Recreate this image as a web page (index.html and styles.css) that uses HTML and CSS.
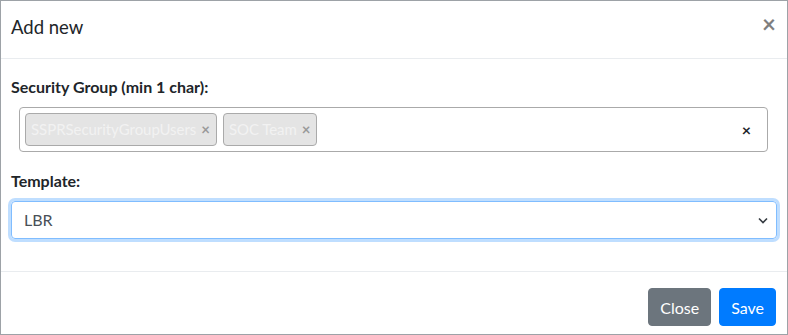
FILE: index.html
```html
<!DOCTYPE html>
<html lang="en">
<head>
<meta charset="utf-8">
<title>Add new</title>
<link rel="stylesheet" href="styles.css">
</head>
<body>
<div class="modal">
  <div class="modal-header">
    <h5 class="modal-title">Add new</h5>
    <button class="close" type="button" aria-label="Close">&times;</button>
  </div>
  <div class="modal-body">
    <div class="form-group">
      <label class="label">Security Group (min 1 char):</label>
      <div class="multi">
        <ul class="choices">
          <li class="choice">SSPRSecurityGroupUsers<span class="choice-x">&times;</span></li>
          <li class="choice">SOC Team<span class="choice-x">&times;</span></li>
        </ul>
        <span class="clear">&times;</span>
      </div>
    </div>
    <div class="form-group">
      <label class="label">Template:</label>
      <div class="select">
        <span class="select-value">LBR</span>
        <svg class="chevron" width="10" height="7" viewBox="0 0 10 7"><path d="M1 1.5 L5 5.5 L9 1.5" fill="none" stroke="#343a40" stroke-width="1.6"/></svg>
      </div>
    </div>
  </div>
  <div class="modal-footer">
    <button class="btn btn-secondary" type="button">Close</button>
    <button class="btn btn-primary" type="button">Save</button>
  </div>
</div>
</body>
</html>
```
FILE: styles.css
```css
* { box-sizing: border-box; }
html, body { margin: 0; padding: 0; }
body {
  font-family: "Lato", "Noto Sans", sans-serif;
  font-size: 16px;
  line-height: 1.5;
  color: #212529;
  background: #fff;
}
.modal {
  width: 788px;
  height: 335px;
  border: 1px solid #9da2a7;
  display: flex;
  flex-direction: column;
}
.modal-header {
  display: flex;
  justify-content: space-between;
  align-items: flex-start;
  height: 58px;
  padding: 11px 10px 0 10px;
  border-bottom: 1px solid #e9ecef;
}
.modal-title {
  margin: 0;
  font-size: 18.5px;
  font-weight: 400;
  line-height: 30px;
}
.close {
  border: 0;
  background: transparent;
  padding: 0;
  margin: 0 1px 0 0;
  font-family: inherit;
  font-size: 24px;
  font-weight: 700;
  line-height: 1;
  color: #000;
  opacity: .5;
  cursor: pointer;
}
.modal-body {
  flex: 1;
  padding: 16px 10px 0 10px;
}
.form-group { margin-bottom: 17px; }
.label {
  display: block;
  font-weight: 700;
  margin-bottom: 8px;
}
.multi {
  margin: 0 9px 0 8px;
  border: 1px solid #aaa;
  border-radius: 4px;
  padding: 5px;
  display: flex;
  align-items: center;
}
.choices {
  list-style: none;
  margin: 0;
  padding: 0;
  display: flex;
  gap: 6px;
  flex: 1;
}
.choice {
  height: 33px;
  display: flex;
  align-items: center;
  padding: 0 6px 0 5px;
  background: #e4e4e4;
  border: 1px solid #aaa;
  border-radius: 4px;
  color: #f2f2f2;
  font-size: 15px;
  letter-spacing: -0.05px;
}
.choice-x {
  margin-left: 5px;
  font-weight: 700;
  color: #999;
  font-size: 15px;
}
.clear {
  font-weight: 700;
  font-size: 16px;
  color: #212529;
  margin-right: 11px;
}
.select {
  height: 38px;
  border: 1px solid #80bdff;
  border-radius: 4px;
  box-shadow: 0 0 0 3px rgba(0, 123, 255, .25);
  display: flex;
  align-items: center;
  justify-content: space-between;
  padding: 0 8px 0 12px;
  color: #495057;
}
.chevron { display: block; }
.modal-footer {
  display: flex;
  justify-content: flex-end;
  gap: 8px;
  padding: 16px 11px 0 10px;
  height: 63px;
  border-top: 1px solid #e9ecef;
}
.btn {
  height: 38px;
  padding: 0 11px;
  border: 1px solid transparent;
  border-radius: 4px;
  font-family: inherit;
  font-size: 16px;
  color: #fff;
  cursor: pointer;
}
.btn-secondary { background: #6c757d; border-color: #6c757d; }
.btn-primary { background: #007bff; border-color: #007bff; }
```
